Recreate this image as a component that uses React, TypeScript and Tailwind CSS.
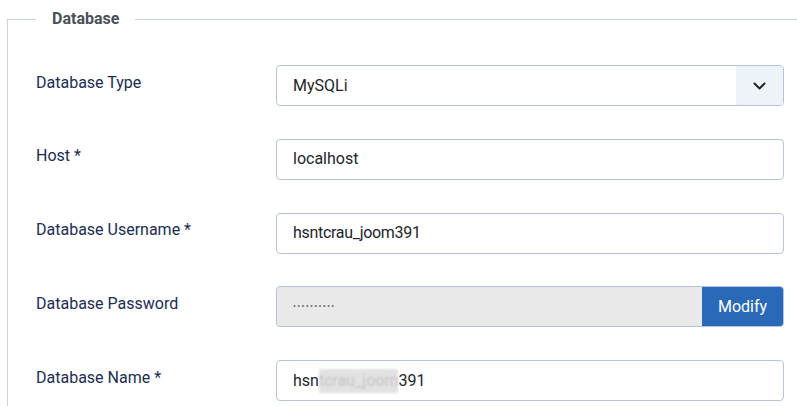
import { ReactNode } from "react";

type Row = {
	label: string;
	control: ReactNode;
};

const inputBase =
	"flex h-[41px] w-[508px] items-center rounded-[4px] border border-[#b4c4dd] text-[16px] text-[#22262a]";

export default function App() {
	const rows: Row[] = [
		{
			label: "Database Type",
			control: (
				<div className={`${inputBase} overflow-hidden bg-white`}>
					<span className="flex-1 pl-4">MySQLi</span>
					<span className="flex h-full w-[47px] items-center justify-center bg-[#eef3fa]">
						<svg width="13" height="8" viewBox="0 0 13 8" fill="none" stroke="#22262a" strokeWidth="2" strokeLinecap="round" strokeLinejoin="round">
							<path d="M1.5 1.5l5 5 5-5" />
						</svg>
					</span>
				</div>
			),
		},
		{
			label: "Host *",
			control: <div className={`${inputBase} bg-white px-4`}>localhost</div>,
		},
		{
			label: "Database Username *",
			control: <div className={`${inputBase} bg-white px-4 tracking-[-0.3px]`}>hsntcrau_joom391</div>,
		},
		{
			label: "Database Password",
			control: (
				<div className={`${inputBase} overflow-hidden bg-[#e9e9e9]`}>
					<span className="flex-1 pl-4 text-[9px] tracking-[1.2px] text-[#6b6b6b]">••••••••••</span>
					<button className="h-full w-[81px] bg-[#2a69b8] text-[16px] text-white">Modify</button>
				</div>
			),
		},
		{
			label: "Database Name *",
			control: (
				<div className={`${inputBase} bg-white px-4`}>
					hsn
					<span className="bg-[#e2e2e2] text-[#c4c4c4] blur-[1px]">tcrau_joom</span>
					391
				</div>
			),
		},
	];

	return (
		<div className="h-[406px] w-[797px] overflow-hidden bg-white font-['Roboto',sans-serif]">
			<fieldset className="ml-[7px] mt-[7px] w-[840px] border border-[#c8d3e2] pb-10 pl-[28px] pt-[34px]">
				<legend className="px-4 text-[16px] font-bold leading-[24px] text-[#495057]">Database</legend>
				<div className="flex flex-col gap-[32.75px]">
					{rows.map((row) => (
						<div key={row.label} className="flex items-start">
							<label className="w-[240px] pt-[5.5px] text-[16px] leading-[24px] text-[#1a2c57]">{row.label}</label>
							{row.control}
						</div>
					))}
				</div>
			</fieldset>
		</div>
	);
}
